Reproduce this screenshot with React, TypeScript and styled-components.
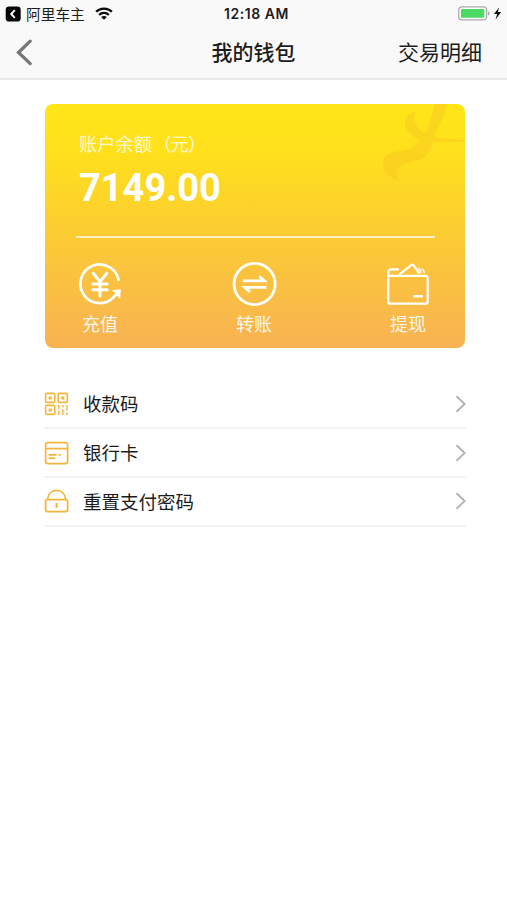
import React from 'react';
import styled, { createGlobalStyle } from 'styled-components';

const GlobalStyle = createGlobalStyle`
  * { box-sizing: border-box; }
  body {
    margin: 0;
    background: #fff;
    font-family: "Liberation Sans", "Noto Sans CJK SC", sans-serif;
    color: #1c1c1c;
  }
`;

const Screen = styled.div`
  width: 507px;
  height: 900px;
  background: #fff;
  overflow: hidden;
`;

const Header = styled.header`
  height: 80px;
  background: #f9f9f9;
  border-bottom: 2px solid #eaeaea;
`;

const StatusBar = styled.div`
  display: grid;
  grid-template-columns: 1fr auto 1fr;
  align-items: center;
  height: 28px;
  padding: 0 5px;
`;

const StatusGroup = styled.div<{ $end?: boolean }>`
  display: flex;
  align-items: center;
  justify-content: ${(p) => (p.$end ? 'flex-end' : 'flex-start')};
`;

const AppName = styled.span`
  margin: 0 10px 0 5px;
  font-family: "Noto Sans CJK SC", sans-serif;
  font-size: 14.7px;
  line-height: 20px;
`;

const Clock = styled.span`
  margin-bottom: 1px;
  padding-left: 6px;
  font-family: Inter, sans-serif;
  font-size: 14px;
  font-weight: 600;
  letter-spacing: 0.55px;
`;

const NavBar = styled.nav`
  display: grid;
  grid-template-columns: 1fr auto 1fr;
  align-items: center;
  height: 49px;
  padding: 0 25px 0 16px;
`;

const BackButton = styled.button`
  display: flex;
  width: 18px;
  padding: 0;
  border: 0;
  background: none;
`;

const Title = styled.h1`
  margin: 0 0 3px 9px;
  font-family: "Noto Sans CJK SC", sans-serif;
  font-size: 21px;
  font-weight: 500;
  line-height: 30px;
`;

const NavLink = styled.span`
  justify-self: end;
  margin-bottom: 3px;
  font-family: "Noto Sans CJK SC", sans-serif;
  font-size: 21px;
  line-height: 30px;
`;

const Card = styled.section`
  position: relative;
  width: 420px;
  height: 244px;
  margin: 24px 0 0 45px;
  padding: 26px 30px 0 31px;
  border-radius: 8px;
  overflow: hidden;
  background: linear-gradient(#ffe618 0%, #ffe01c 20%, #fbc936 58%, #f8b253 100%);
  color: #fff;
`;

const Watermark = styled.svg`
  position: absolute;
  top: 0;
  right: 0;
`;

const BalanceLabel = styled.div`
  padding-left: 3px;
  font-family: "Noto Sans CJK SC", sans-serif;
  font-size: 18.3px;
  line-height: 27px;
  color: rgba(255, 255, 255, 0.8);
`;

const Unit = styled.span`
  margin-left: 1px;
  letter-spacing: -0.8px;
`;

const Balance = styled.div`
  padding-left: 3px;
  margin-top: 9px;
  font-family: Roboto, sans-serif;
  font-size: 38px;
  font-weight: 700;
  line-height: 44px;
`;

const Divider = styled.div`
  height: 2px;
  margin-top: 26px;
  background: rgba(255, 255, 255, 0.72);
`;

const Actions = styled.div`
  display: flex;
  justify-content: space-between;
  padding: 24px 5px 0 2px;
`;

const Action = styled.div`
  display: flex;
  flex-direction: column;
  align-items: center;
  width: 44px;

  svg { overflow: visible; }
`;

const ActionLabel = styled.span`
  margin-top: 4px;
  font-family: "Noto Sans CJK SC", sans-serif;
  font-size: 18px;
  line-height: 27px;
  white-space: nowrap;
  color: rgba(255, 255, 255, 0.9);
`;

const Menu = styled.ul`
  width: 422px;
  margin: 32.4px 0 0 44px;
  padding: 0;
  list-style: none;
`;

const MenuRow = styled.li`
  display: grid;
  grid-template-columns: 25px 1fr 11px;
  column-gap: 14px;
  align-items: center;
  height: 48.8px;
  border-bottom: 2px solid #f3f3f3;
  font-family: "Noto Sans CJK SC", sans-serif;
  font-size: 18.5px;
  line-height: 27px;
`;

const BackAppIcon = () => (
  <svg width="16" height="16" viewBox="0 0 16 16">
    <rect x="0.7" y="0.6" width="15" height="15" rx="3.4" fill="#050505" />
    <path d="M9.8 4.2 6.2 8l3.6 3.8" fill="none" stroke="#fff" strokeWidth="1.9" />
  </svg>
);

const WifiIcon = () => (
  <svg width="18" height="14" viewBox="0 0 18 14" fill="none" stroke="#080808" strokeWidth="2.3">
    <path d="M1.1 4.8C5.4 .5 12.6 .5 16.9 4.8" />
    <path d="M4.1 7.8c2.8-2.7 7-2.7 9.8 0" />
    <path d="M9 12.8 6.2 10c1.6-1.5 4-1.5 5.6 0Z" fill="#080808" stroke="none" />
  </svg>
);

const BatteryIcon = () => (
  <svg width="44" height="16" viewBox="0 0 44 16">
    <rect x="0.7" y="0.9" width="28" height="13" rx="3.4" fill="#fdfdfd" stroke="#aaa" strokeWidth="1.2" />
    <rect x="2.9" y="3" width="23.4" height="8.8" rx="1" fill="#4cd964" />
    <path d="M30 5.3c2 .6 2 3.8 0 4.4Z" fill="#aaa" />
    <path d="M41 1.4 36 7.9h3.2L37.5 13.4l5.6-7.3h-3.3Z" fill="#050505" />
  </svg>
);

const BackIcon = () => (
  <svg width="18" height="28" viewBox="0 0 18 28">
    <path d="M14.2 2.2 2.5 13.5l11.7 11.1" fill="none" stroke="#757575" strokeWidth="3.2" strokeLinecap="round" />
  </svg>
);

const RechargeIcon = () => (
  <svg width="44" height="44" viewBox="0 0 44 44" fill="none" stroke="#fff" strokeWidth="2.7">
    <path d="M40.8 19A19.3 19.3 0 1 0 35.6 35.2L40.2 30.4" />
    <path d="M34 28.3 42.8 27.3 42.2 37 39.4 34 37.2 31Z" fill="#fff" stroke="none" />
    <path d="m15.2 11.2 6.8 8.4 6.8-8.4M22 19.6v14.4M14.8 22h14.4M14.8 27.8h14.4" strokeWidth="3" strokeLinecap="round" />
  </svg>
);

const TransferIcon = () => (
  <svg width="44" height="44" viewBox="0 0 44 44" fill="none" stroke="#fff" strokeWidth="2.8">
    <circle cx="22.6" cy="22" r="20.6" />
    <path d="M10.8 18.9h21.6l-5.1-4.7M34.4 25.3H12.8l5.2 4.6" />
  </svg>
);

const WithdrawIcon = () => (
  <svg width="44" height="44" viewBox="0 0 44 44" fill="none" stroke="#fff" strokeWidth="2.3" strokeLinecap="round" strokeLinejoin="round">
    <path d="M2.8 13.8h36.4a2.5 2.5 0 0 1 2.5 2.5v22.9a2.5 2.5 0 0 1-2.5 2.5H4.7a2.5 2.5 0 0 1-2.5-2.5V10.4a3 3 0 0 1 3-3h6.8" />
    <path d="M13.8 12.2 25.6 2.9q1-.6 1.8.2l5.6 7.7" />
    <path d="M33 6.6q1.9 1 2.1 3.8M36.4 7.2q1.7 1.2 1.8 3.4" strokeWidth="1.5" />
    <path d="M27.4 34.3h9.5" strokeLinecap="butt" strokeWidth="2.6" />
  </svg>
);

const QrIcon = () => (
  <svg width="25" height="24" viewBox="0 0 25 24" fill="none" stroke="#f3b63c" strokeWidth="1.6">
    <rect x="1.6" y="1.4" width="9.2" height="9" rx="1.2" />
    <rect x="14.2" y="1.4" width="9.2" height="9" rx="1.2" />
    <rect x="1.6" y="13.4" width="9.2" height="9" rx="1.2" />
    <path d="M4.6 5.9h3.2M17.2 5.9h3.2M4.6 17.9h3.2" strokeWidth="3" />
    <path d="M14.8 13v4.2M14.8 19v4M18.9 13v2.2M18.9 17v6M23 13v5.5M23 20.3V23" strokeWidth="1.4" />
  </svg>
);

const BankCardIcon = () => (
  <svg width="25" height="24" viewBox="0 0 25 24" fill="none" stroke="#f3b63c" strokeWidth="1.7">
    <rect x="1.6" y="1.6" width="22" height="21" rx="2.3" />
    <path d="M1.6 7.6h22M4.6 13.8h8M4.6 17.2h6.5M14.6 13.8h2.2" />
  </svg>
);

const LockIcon = () => (
  <svg width="25" height="24" viewBox="0 0 25 24" fill="none" stroke="#f3b63c" strokeWidth="1.8">
    <rect x="1.6" y="10.6" width="22" height="12" rx="2" />
    <path d="M3.5 10.3C4.1 5 7.7 1.4 12.6 1.4S21.1 5 21.7 10.3" />
    <path d="M12.6 14v4.8" strokeWidth="2.2" />
  </svg>
);

const ForwardIcon = () => (
  <svg width="11" height="18" viewBox="0 0 11 18">
    <path d="m1.5 1.3 8.2 7.7-8.2 7.7" fill="none" stroke="#b2b2b2" strokeWidth="1.9" />
  </svg>
);

const actions = [
  { label: '充值', Icon: RechargeIcon },
  { label: '转账', Icon: TransferIcon },
  { label: '提现', Icon: WithdrawIcon },
];

const menu = [
  { label: '收款码', Icon: QrIcon },
  { label: '银行卡', Icon: BankCardIcon },
  { label: '重置支付密码', Icon: LockIcon },
];

export default function App() {
  return (
    <Screen>
      <GlobalStyle />
      <Header>
        <StatusBar>
          <StatusGroup>
            <BackAppIcon />
            <AppName>阿里车主</AppName>
            <WifiIcon />
          </StatusGroup>
          <Clock>12:18 AM</Clock>
          <StatusGroup $end>
            <BatteryIcon />
          </StatusGroup>
        </StatusBar>
        <NavBar>
          <BackButton aria-label="返回"><BackIcon /></BackButton>
          <Title>我的钱包</Title>
          <NavLink>交易明细</NavLink>
        </NavBar>
      </Header>
      <Card>
        <Watermark width="90" height="80" viewBox="0 0 90 80" fill="#f8c81f" fillOpacity="0.5">
          <path d="M60 0h12C68 15 63 25 59 31l2 3 29 2v2l-32 0c-3 8-6 16-13 18-11 2-21 5-23 12q0 5 2 8C15 74 8 69 8 60c0-9 7-12 17-13 9-1 15-4 20-11-9-4-15-10-15-16 0-7 4-11 11-12-4 8-1 14 7 20L51 29 60 0Z" />
        </Watermark>
        <BalanceLabel>账户余额<Unit>（元）</Unit></BalanceLabel>
        <Balance>7149.00</Balance>
        <Divider />
        <Actions>
          {actions.map(({ label, Icon }) => (
            <Action key={label}>
              <Icon />
              <ActionLabel>{label}</ActionLabel>
            </Action>
          ))}
        </Actions>
      </Card>
      <Menu>
        {menu.map(({ label, Icon }) => (
          <MenuRow key={label}>
            <Icon />
            <span>{label}</span>
            <ForwardIcon />
          </MenuRow>
        ))}
      </Menu>
    </Screen>
  );
}
